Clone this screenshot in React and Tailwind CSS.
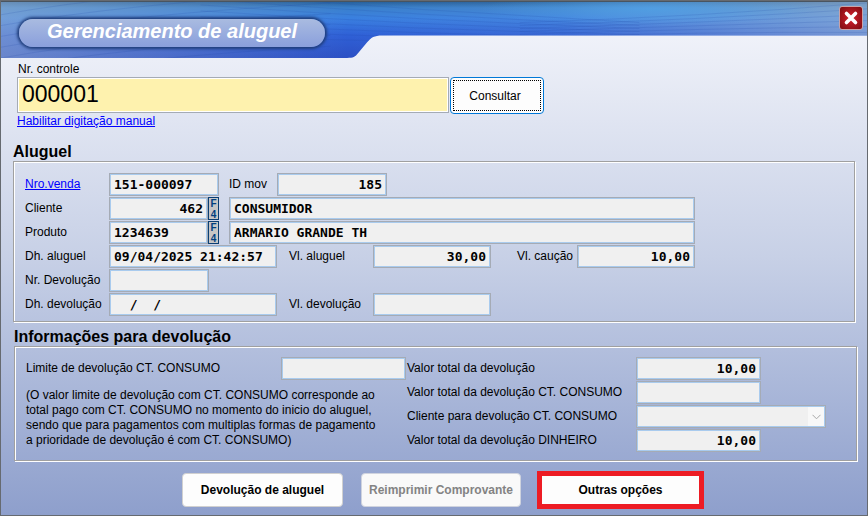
import React from 'react';

const fieldBase =
  'h-[23px] border border-[#a5abb5] bg-[#f0f0f0] px-1 text-black font-bold text-[13px] leading-4 outline-none shadow-[inset_0_0_0_1px_#a9cbee] font-["DejaVu_Sans_Mono",monospace]';

const Field = ({ id, value = '', className = '' }) => (
  <input id={id} type="text" readOnly defaultValue={value} className={`${fieldBase} ${className}`} />
);

const Label = ({ htmlFor, className = '', children }) => (
  <label htmlFor={htmlFor} className={`shrink-0 whitespace-nowrap ${className}`}>
    {children}
  </label>
);

const F4Button = ({ label }) => (
  <button
    type="button"
    aria-label={label}
    className='flex h-[23px] w-[11px] shrink-0 flex-col items-center justify-center border border-[#0b3f73] bg-[#c6c6c6] font-["Liberation_Sans",sans-serif] text-[10px] leading-[11px] font-bold text-[#003f80]'
  >
    <span>F</span>
    <span>4</span>
  </button>
);

const Panel = ({ title, className = '', children }) => (
  <section>
    <h2 className="h-[18px] text-[16px] leading-[18px] font-bold">{title}</h2>
    <div
      className={`border border-[#a0a0a0] shadow-[1px_1px_0_#fff,inset_1px_1px_0_#fff] ${className}`}
    >
      {children}
    </div>
  </section>
);

const HeaderArt = () => (
  <svg
    className="absolute inset-0 h-full w-full"
    viewBox="0 0 868 58"
    preserveAspectRatio="none"
    aria-hidden="true"
  >
    <defs>
      <linearGradient id="sky" x1="0" y1="0" x2="0" y2="1">
        <stop offset="0" stopColor="#245c94" />
        <stop offset="0.12" stopColor="#3a80cc" />
        <stop offset="0.3" stopColor="#3a80e0" />
        <stop offset="0.6" stopColor="#2f60d6" />
        <stop offset="1" stopColor="#2c50c4" />
      </linearGradient>
      <linearGradient id="haze" x1="0" y1="0" x2="1" y2="0">
        <stop offset="0" stopColor="#a9bcd2" stopOpacity="0.5" />
        <stop offset="0.4" stopColor="#a9bcd2" stopOpacity="0" />
        <stop offset="0.65" stopColor="#a9bcd2" stopOpacity="0.1" />
        <stop offset="1" stopColor="#a9bcd2" stopOpacity="0.6" />
      </linearGradient>
      <radialGradient id="glow">
        <stop offset="0" stopColor="#4fa4ea" stopOpacity="0.7" />
        <stop offset="1" stopColor="#4fa4ea" stopOpacity="0" />
      </radialGradient>
      <clipPath id="tab">
        <path d="M0 0H868V35H382C374 35 371 37 367 42L358 53C355 57 353 58 347 58H0Z" />
      </clipPath>
    </defs>
    <g clipPath="url(#tab)">
      <rect width="868" height="58" fill="url(#sky)" />
      <rect width="868" height="58" fill="url(#haze)" />
      <ellipse cx="650" cy="8" rx="170" ry="17" fill="url(#glow)" />
      <g fill="none" stroke="#1d49a8" strokeOpacity="0.16">
        {[0, 1, 2, 3, 4, 5, 6].map((i) => (
          <path key={`l${i}`} d={`M0 ${14 + i * 11}Q120 ${-8 + i * 11} 330 ${-20 + i * 11}`} />
        ))}
        {[0, 1, 2, 3, 4, 5, 6, 7].map((i) => (
          <path key={`m${i}`} d={`M200 ${-8 + i * 6}Q420 ${10 + i * 5} 640 ${22 + i * 3}`} />
        ))}
        {[0, 1, 2, 3, 4, 5, 6].map((i) => (
          <path key={`r${i}`} d={`M520 ${40 - i * 3}Q700 ${34 - i * 3} 868 ${38 - i * 6}`} />
        ))}
      </g>
      <rect width="868" height="1" fill="#4a5560" />
    </g>
  </svg>
);

const Header = () => (
  <header className="relative flex h-[57px] items-start justify-between pr-[4px] pl-[18px]">
    <HeaderArt />
    <h1 className="relative mt-[18px] flex h-7 w-[306px] justify-center rounded-full bg-linear-to-b from-[#a9bbe0] to-[#8a9fdc] text-[20px] leading-6 font-bold text-white italic shadow-[0_0_3px_2px_#1f3d7a]">
      Gerenciamento de aluguel
    </h1>
    <button
      type="button"
      aria-label="Fechar"
      className="relative mt-[5px] flex h-6 w-6 items-center justify-center rounded-[3px] border border-[#c9a3a8] bg-radial from-[#d8202c] to-[#7c0d12]"
    >
      <svg width="16" height="16" viewBox="0 0 16 16" aria-hidden="true">
        <path d="M3.5 3.5L12.5 12.5M12.5 3.5L3.5 12.5" stroke="#fff" strokeWidth="3.6" strokeLinecap="round" />
      </svg>
    </button>
  </header>
);

const Search = () => (
  <form className="mx-4">
    <label htmlFor="controle" className="block h-[19px] pt-1 pl-px leading-[15px]">
      Nr. controle
    </label>
    <div className="flex items-start gap-px">
      <input
        id="controle"
        type="text"
        defaultValue="000001"
        className="h-9 w-[432px] border border-[#a5abb5] bg-[#fef2ae] px-1 pb-[2px] text-[23px] leading-7 shadow-[inset_0_0_0_1px_#fff] outline-none"
      />
      <button type="button" className="h-[37px] w-[94px] rounded-[4px] border border-[#0078d7] bg-[#fdfdfd] p-[2px]">
        <span className="flex h-full items-center justify-center border border-dotted border-black pt-px pr-1">
          Consultar
        </span>
      </button>
    </div>
    <a href="#manual" className="inline-block text-[#0000ff] underline">
      Habilitar digitação manual
    </a>
  </form>
);

const Rental = () => (
  <Panel title="Aluguel" className="flex flex-col gap-px pt-[11px] pr-4 pb-[5px] pl-[11px]">
    <div className="flex items-center">
      <a href="#venda" className="w-[84px] shrink-0 text-[#0000ff] underline">
        Nro.venda
      </a>
      <Field id="venda" value="151-000097" className="w-[110px]" />
      <Label htmlFor="mov" className="ml-[10px] w-12">
        ID mov
      </Label>
      <Field id="mov" value="185" className="w-[110px] text-right" />
    </div>
    <div className="flex items-center">
      <Label htmlFor="cliente" className="w-[84px]">
        Cliente
      </Label>
      <Field id="cliente" value="462" className="w-[99px] text-right" />
      <F4Button label="Buscar cliente" />
      <Field id="cliente-nome" value="CONSUMIDOR" className="ml-[10px] w-[466px]" />
    </div>
    <div className="flex items-center">
      <Label htmlFor="produto" className="w-[84px]">
        Produto
      </Label>
      <Field id="produto" value="1234639" className="w-[99px]" />
      <F4Button label="Buscar produto" />
      <Field id="produto-nome" value="ARMARIO GRANDE TH" className="ml-[10px] w-[466px]" />
    </div>
    <div className="flex items-center">
      <Label htmlFor="dh-aluguel" className="w-[84px]">
        Dh. aluguel
      </Label>
      <Field id="dh-aluguel" value="09/04/2025 21:42:57" className="w-[168px]" />
      <Label htmlFor="vl-aluguel" className="ml-3 w-[84px]">
        Vl. aluguel
      </Label>
      <Field id="vl-aluguel" value="30,00" className="w-[118px] text-right" />
      <Label htmlFor="vl-caucao" className="ml-[26px] w-[60px]">
        Vl. caução
      </Label>
      <Field id="vl-caucao" value="10,00" className="w-[118px] text-right" />
    </div>
    <div className="flex items-center">
      <Label htmlFor="nr-devolucao" className="w-[84px]">
        Nr. Devolução
      </Label>
      <Field id="nr-devolucao" className="w-[100px]" />
    </div>
    <div className="flex items-center">
      <Label htmlFor="dh-devolucao" className="w-[84px]">
        Dh. devolução
      </Label>
      <Field id="dh-devolucao" value="  /  /" className="w-[168px]" />
      <Label htmlFor="vl-devolucao" className="ml-3 w-[84px]">
        Vl. devolução
      </Label>
      <Field id="vl-devolucao" className="w-[118px]" />
    </div>
  </Panel>
);

const Refund = () => (
  <Panel title="Informações para devolução" className="flex gap-px pt-[10px] pb-[8px] pl-[11px]">
    <div className="w-[380px] shrink-0">
      <div className="flex items-center justify-between">
        <Label htmlFor="limite">Limite de devolução CT. CONSUMO</Label>
        <Field id="limite" className="w-[125px]" />
      </div>
      <p className="mt-2">
        (O valor limite de devolução com CT. CONSUMO corresponde ao
        <br />
        total pago com CT. CONSUMO no momento do inicio do aluguel,
        <br />
        sendo que para pagamentos com multiplas formas de pagamento
        <br />a prioridade de devolução é com CT. CONSUMO)
      </p>
    </div>
    <div className="grid grid-cols-[229px_1fr] content-start items-center gap-y-px">
      <Label htmlFor="total">Valor total da devolução</Label>
      <Field id="total" value="10,00" className="w-[125px] text-right" />
      <Label htmlFor="total-ct">Valor total da devolução CT. CONSUMO</Label>
      <Field id="total-ct" className="w-[125px]" />
      <Label htmlFor="cliente-ct">Cliente para devolução CT. CONSUMO</Label>
      <div className="relative w-[190px]">
        <select
          id="cliente-ct"
          disabled
          className={`${fieldBase} block w-full appearance-none opacity-100`}
        />
        <span className="pointer-events-none absolute top-[2px] right-[2px] flex h-[19px] w-4 items-center justify-center bg-[#f8f8f8]">
          <svg width="9" height="6" viewBox="0 0 9 6" fill="none" stroke="#a8a8a8" aria-hidden="true">
            <path d="M0.5 0.8L4.5 4.8L8.5 0.8" />
          </svg>
        </span>
      </div>
      <Label htmlFor="total-dinheiro">Valor total da devolução DINHEIRO</Label>
      <Field id="total-dinheiro" value="10,00" className="w-[125px] text-right" />
    </div>
  </Panel>
);

const Actions = () => (
  <div className="mt-[10px] flex items-center justify-center pl-[18px] font-bold">
    <button type="button" className="h-[34px] w-[161px] rounded-[4px] border border-[#d0d0d0] bg-[#fdfdfd]">
      Devolução de aluguel
    </button>
    <button
      type="button"
      disabled
      className="ml-[18px] h-[34px] w-[160px] rounded-[4px] border border-[#cfd3de] bg-[#f9f9f9] whitespace-nowrap text-[#838383]"
    >
      Reimprimir Comprovante
    </button>
    <button type="button" className="ml-4 h-[38px] w-[167px] border-5 border-[#ed1c24] bg-[#fdfdfd]">
      Outras opções
    </button>
  </div>
);

export default function App() {
  return (
    <main className='min-h-screen border border-[#666a70] bg-linear-to-b from-[#f6f7fc] via-[#c7d0e6] to-[#8e9fcc] font-["Liberation_Sans",Arial,sans-serif] text-[12px] leading-[15px] text-black'>
      <Header />
      <Search />
      <div className="mx-3 mt-[14px]">
        <Rental />
      </div>
      <div className="mt-[6px] mr-[10px] ml-[13px]">
        <Refund />
      </div>
      <Actions />
    </main>
  );
}
